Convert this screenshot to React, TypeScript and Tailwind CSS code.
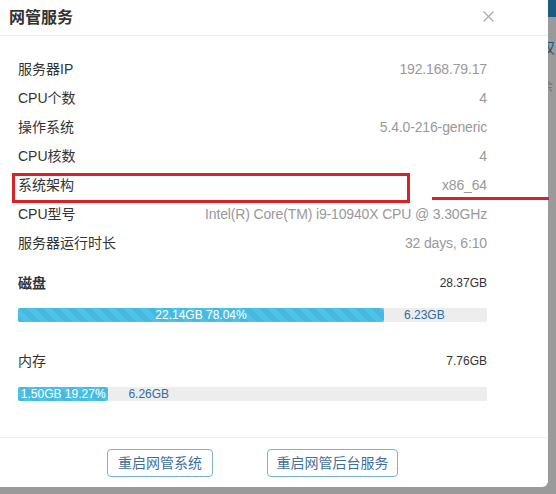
import React from 'react';

const rows: [string, string][] = [
  ['服务器IP', '192.168.79.17'],
  ['CPU个数', '4'],
  ['操作系统', '5.4.0-216-generic'],
  ['CPU核数', '4'],
  ['系统架构', 'x86_64'],
  ['CPU型号', 'Intel(R) Core(TM) i9-10940X CPU @ 3.30GHz'],
  ['服务器运行时长', '32 days, 6:10'],
];

function UsageBar({ used, percent, free }: { used: string; percent: number; free: string }) {
  return (
    <div className="flex h-[14px] w-full items-center rounded-[2px] bg-[#ededed] text-[12px] leading-none">
      <div
        className="flex h-full items-center justify-center whitespace-nowrap rounded-[2px] bg-[#4cc3ea] bg-[linear-gradient(45deg,rgba(0,0,0,.06)_25%,transparent_25%,transparent_50%,rgba(0,0,0,.06)_50%,rgba(0,0,0,.06)_75%,transparent_75%,transparent)] bg-[length:16px_16px] px-[3px] text-white"
        style={{ width: `${percent}%` }}
      >
        {used} {percent.toFixed(2)}%
      </div>
      <span className="ml-[20px] text-[#2e6ea6]">{free}</span>
    </div>
  );
}

export default function App() {
  return (
    <div className="relative h-[494px] w-[556px] overflow-hidden bg-[#9a9a9a] font-['Liberation_Sans','Noto_Sans_CJK_SC',sans-serif]">
      {/* page behind the dialog */}
      <div className="h-[17px] bg-[#1d5a80]" />
      <div className="pl-[541px] pt-[24px] text-[14px] leading-none">
        <div className="text-[#1d4f70]">汉</div>
        <div className="mt-[26px] text-[12px] text-[#6f6f6f]">余</div>
      </div>

      {/* dialog */}
      <div className="absolute left-0 top-0 flex h-[487px] w-[548px] flex-col rounded-br-[6px] bg-white">
        <div className="flex h-[36px] items-center justify-between border-b border-[#eeeeee] pl-[9px] pr-[54px]">
          <h2 className="text-[16px] font-bold text-[#333]">网管服务</h2>
          <svg width="11" height="11" viewBox="0 0 11 11" className="mt-[-2px]">
            <path d="M0.5 0.5L10.5 10.5M10.5 0.5L0.5 10.5" stroke="#a8a8a8" strokeWidth="1.1" />
          </svg>
        </div>

        <div className="flex-1 pl-[18px] pr-[61px] pt-[19px] text-[14px]">
          {rows.map(([label, value]) => (
            <div key={label} className="flex h-[29px] items-center justify-between">
              <span className="text-[#333]">{label}</span>
              <span className="tracking-[-0.15px] text-[#999]">{value}</span>
            </div>
          ))}

          <div className="mt-[15px] flex h-[20px] items-center justify-between">
            <span className="font-bold text-[#333]">磁盘</span>
            <span className="text-[12px] text-[#333]">28.37GB</span>
          </div>
          <div className="mt-[15px]">
            <UsageBar used="22.14GB" percent={78.04} free="6.23GB" />
          </div>

          <div className="mt-[29px] flex h-[20px] items-center justify-between">
            <span className="text-[#333]">内存</span>
            <span className="text-[12px] text-[#333]">7.76GB</span>
          </div>
          <div className="mt-[16px]">
            <UsageBar used="1.50GB" percent={19.27} free="6.26GB" />
          </div>
        </div>

        <div className="flex h-[50px] items-start gap-[54px] border-t border-[#f0f0f0] pl-[107px] pt-[11px] text-[14px]">
          <button className="h-[28px] w-[106px] rounded-[4px] border border-[#7eb2d2] text-[#3f6f98]">重启网管系统</button>
          <button className="h-[28px] w-[131px] rounded-[4px] border border-[#7eb2d2] text-[#3f6f98]">重启网管后台服务</button>
        </div>

        {/* annotations */}
        <div className="absolute left-[12px] top-[173px] h-[30px] w-[398px] border-[3px] border-[#d9212a]" />
        <div className="absolute left-[432px] top-[197px] h-[3px] w-[117px] bg-[#d9212a]" />
      </div>
    </div>
  );
}
